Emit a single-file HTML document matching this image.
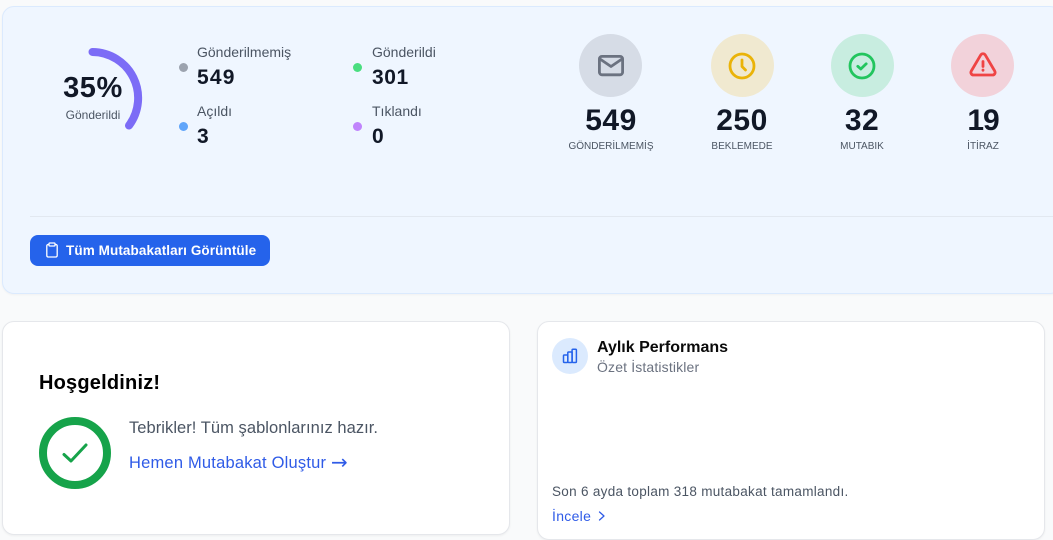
<!DOCTYPE html>
<html lang="tr"><head><meta charset="utf-8"><title>Panel</title>
<style>
*{box-sizing:border-box;margin:0;padding:0}
html,body{width:1053px;height:540px;overflow:hidden;background:#f9fafb;font-family:"Liberation Sans",sans-serif}
.a{position:absolute;white-space:nowrap;line-height:1}
.c{transform:translateX(-50%)}
.panel{position:absolute;left:2px;top:6px;width:1060px;height:288px;background:#eff6ff;border:1px solid #dbeafe;border-radius:12px;box-shadow:0 1px 2px rgba(0,0,0,.04)}
.card{position:absolute;background:#fff;border:1px solid #e5e7eb;border-radius:12px;box-shadow:0 1px 2px rgba(0,0,0,.05)}
.dot{position:absolute;width:9px;height:9px;border-radius:50%}
.lb{font-size:14px;color:#4b5563}
.v{font-size:21px;font-weight:700;color:#111827;letter-spacing:1.2px}
.circ{position:absolute;top:34px;width:63px;height:63px;border-radius:50%}
.n{font-size:30px;font-weight:700;color:#111827;letter-spacing:.5px}
.s{font-size:10px;color:#4b5563}
svg{position:absolute;fill:none}
</style></head><body>
<div class="panel"></div>

<svg style="left:40px;top:45px" width="110" height="100" viewBox="40 45 110 100">
<path d="M92.500 52A46 46 0 0 1 129 125.500" stroke="#7c6cf6" stroke-width="8" stroke-linecap="round"/>
</svg>
<div class="a c" style="left:93px;top:74px;font-size:29px;font-weight:700;color:#111827;letter-spacing:.6px">35%</div>
<div class="a c" style="left:93px;top:109px;font-size:12px;color:#4b5563">Gönderildi</div>

<div class="dot" style="left:179px;top:63px;background:#9ca3af"></div>
<div class="a lb" style="left:197px;top:45px">Gönderilmemiş</div>
<div class="a v" style="left:197px;top:66.500px">549</div>
<div class="dot" style="left:179px;top:122px;background:#60a5fa"></div>
<div class="a lb" style="left:197px;top:104px">Açıldı</div>
<div class="a v" style="left:197px;top:125.500px">3</div>
<div class="dot" style="left:353px;top:63px;background:#4ade80"></div>
<div class="a lb" style="left:372px;top:45px">Gönderildi</div>
<div class="a v" style="left:372px;top:66.500px;letter-spacing:.6px">301</div>
<div class="dot" style="left:353px;top:122px;background:#c084fc"></div>
<div class="a lb" style="left:372px;top:104px">Tıklandı</div>
<div class="a v" style="left:372px;top:125.500px">0</div>

<div class="circ" style="left:579px;background:#d6dce6"></div>
<svg style="left:597px;top:53px" width="28" height="26" viewBox="0 0 28 26" stroke="#6b7280" stroke-width="2.800" stroke-linecap="round" stroke-linejoin="round">
<rect x="2.400" y="3.400" width="23.200" height="18.400" rx="2.500"/><path d="M3 6 14 13.500 25 6"/></svg>
<div class="a c n" style="left:611px;top:106px">549</div>
<div class="a c s" style="left:611px;top:142px">GÖNDERİLMEMİŞ</div>

<div class="circ" style="left:711px;background:#f0e9d0"></div>
<svg style="left:728px;top:52px" width="28" height="28" viewBox="0 0 28 28" stroke="#eab308" stroke-width="2.800" stroke-linecap="round" stroke-linejoin="round">
<circle cx="14" cy="14" r="12"/><path d="M14 8v6.500l3.500 3.500"/></svg>
<div class="a c n" style="left:742px;top:106px">250</div>
<div class="a c s" style="left:742px;top:142px">BEKLEMEDE</div>

<div class="circ" style="left:831px;background:#c8ede0"></div>
<svg style="left:848px;top:52px" width="28" height="28" viewBox="0 0 28 28" stroke="#22c55e" stroke-width="2.800" stroke-linecap="round" stroke-linejoin="round">
<circle cx="14" cy="14" r="12"/><path d="M9.800 14.300 12.800 17 18.200 11.800"/></svg>
<div class="a c n" style="left:862px;top:106px">32</div>
<div class="a c s" style="left:862px;top:142px">MUTABIK</div>

<div class="circ" style="left:951px;background:#f2d2da"></div>
<svg style="left:969px;top:52px" width="28" height="27" viewBox="0 0 28 27" stroke="#ef4444" stroke-width="2.800" stroke-linecap="round" stroke-linejoin="round">
<path d="M11.600 3.200 2.300 19C1.200 21 2.500 23 4.500 23H23.500C25.500 23 26.800 21 25.700 19L16.400 3.200C15.300 1.300 12.700 1.300 11.600 3.200Z"/><path d="M14 9.500v5M14 18v.2"/></svg>
<div class="a c n" style="left:983px;top:106px;letter-spacing:-1px">19</div>
<div class="a c s" style="left:983px;top:142px">İTİRAZ</div>

<div style="position:absolute;left:30px;top:216px;width:1023px;height:1px;background:#e2e8f0"></div>

<div style="position:absolute;left:30px;top:235px;width:240px;height:31px;background:#2563eb;border-radius:8px"></div>
<svg style="left:45px;top:242px" width="14" height="16" viewBox="0 0 14 16" stroke="#fff" stroke-width="1.300" stroke-linejoin="round">
<path d="M4 2.500H3A1.500 1.500 0 0 0 1.800 4v9.500A1.500 1.500 0 0 0 3 15h8a1.500 1.500 0 0 0 1.200-1.500V4A1.500 1.500 0 0 0 11 2.500H10"/><rect x="4" y="1" width="6" height="3" rx=".7"/></svg>
<div class="a" style="left:66px;top:243.500px;font-size:13.500px;font-weight:700;color:#fff;letter-spacing:.1px">Tüm Mutabakatları Görüntüle</div>

<div class="card" style="left:2px;top:321px;width:508px;height:214px"></div>
<div class="a" style="left:39px;top:373px;font-size:20px;font-weight:700;color:#000;letter-spacing:.2px">Hoşgeldiniz!</div>
<svg style="left:39px;top:417px" width="72" height="72" viewBox="0 0 72 72">
<circle cx="36" cy="36" r="32" stroke="#16a34a" stroke-width="8"/>
<path d="M25 37.500 32 44 47 28" stroke="#16a34a" stroke-width="3" stroke-linecap="round" stroke-linejoin="round"/></svg>
<div class="a" style="left:129px;top:420px;font-size:16.500px;color:#4b5563;letter-spacing:.05px">Tebrikler! Tüm şablonlarınız hazır.</div>
<div class="a" style="left:129px;top:454.500px;font-size:16.500px;color:#2f5be7;letter-spacing:.2px">Hemen Mutabakat Oluştur</div>
<div class="a" style="left:331px;top:452px;font-family:'DejaVu Sans',sans-serif;font-size:20px;color:#2f5be7">→</div>

<div class="card" style="left:537px;top:321px;width:508px;height:219px"></div>
<div style="position:absolute;left:552px;top:338px;width:36px;height:36px;border-radius:50%;background:#dbeafe"></div>
<svg style="left:562px;top:348px" width="16" height="16" viewBox="0 0 16 16" stroke="#2563eb" stroke-width="1.500" stroke-linejoin="round">
<rect x="1.500" y="7" width="4.300" height="7.500" rx=".9"/><rect x="5.800" y="4" width="4.300" height="10.500" rx=".9"/><rect x="10.100" y="1.200" width="4.300" height="13.300" rx=".9"/></svg>
<div class="a" style="left:597px;top:340px;font-size:16px;font-weight:700;color:#0a0a0a">Aylık Performans</div>
<div class="a" style="left:597px;top:360px;font-size:14px;color:#6b7280;letter-spacing:.15px">Özet İstatistikler</div>
<div class="a" style="left:552px;top:484.500px;font-size:13.500px;color:#4b5563;letter-spacing:.3px">Son 6 ayda toplam 318 mutabakat tamamlandı.</div>
<div class="a" style="left:552px;top:508.500px;font-size:14px;color:#2f5be7;letter-spacing:.3px">İncele</div>
<svg style="left:597px;top:510px" width="11" height="12" viewBox="0 0 11 12" stroke="#2f5be7" stroke-width="1.300" stroke-linecap="round" stroke-linejoin="round"><path d="M2.500 2 7 6 2.500 10"/></svg>
</body></html>
